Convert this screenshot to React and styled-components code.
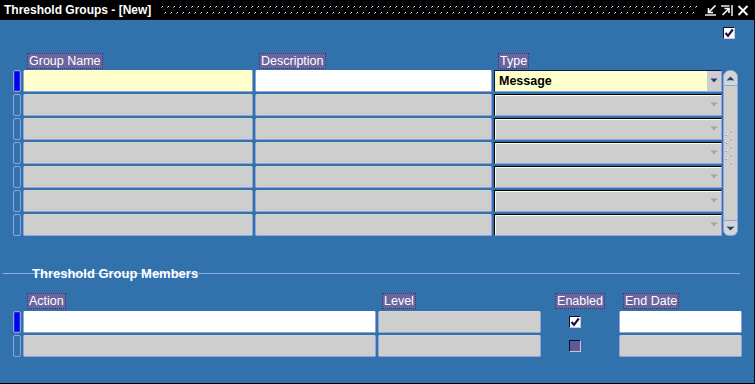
import React from 'react';
import styled, { createGlobalStyle } from 'styled-components';

const Global = createGlobalStyle`
  html, body { margin: 0; padding: 0; background: #3172ad; }
  body { font-family: "Liberation Sans", Arial, sans-serif; }
`;

const Window = styled.div`
  width: 755px;
  height: 384px;
  box-sizing: border-box;
  display: flex;
  flex-direction: column;
  background: #3172ad;
  border-right: 1px solid #0a0f1a;
  border-bottom: 1px solid #000;
  overflow: hidden;
`;

const TitleBar = styled.div`
  height: 20px;
  flex: none;
  background: #000;
  display: flex;
  align-items: center;
  padding: 0 5px 0 4px;
`;

const Title = styled.span`
  color: #fff;
  font: bold 12px "Liberation Sans", Arial, sans-serif;
  white-space: nowrap;
`;

const Dots = styled.svg`
  flex: 1;
  height: 9px;
  margin: 1px 7px 0 10px;
`;

const TitleIcons = styled.div`
  display: flex;
  align-items: center;
  gap: 4px;
`;

const Body = styled.div`
  flex: 1;
  display: flex;
  flex-direction: column;
  padding: 7px 0 0 13px;
`;

const TopRow = styled.div`
  display: flex;
  justify-content: flex-end;
  padding-right: 19px;
  height: 12px;
`;

const UpperBlock = styled.div`
  display: flex;
  margin-top: 14px;
`;

const Grid = styled.div`
  display: grid;
  grid-template-columns: ${p => p.$cols};
  grid-template-rows: ${p => p.$rows};
  column-gap: 2px;
  row-gap: 2px;
`;

const Label = styled.div`
  justify-self: ${p => (p.$center ? 'center' : 'start')};
  margin-left: ${p => (p.$center ? '0' : '4px')};
  height: 16px;
  box-sizing: border-box;
  padding: 0 1px;
  line-height: 14px;
  font-size: 12.5px;
  color: #fff;
  background: #6a659e;
  border: 1px dotted #34356a;
  white-space: nowrap;
`;

const Indicator = styled.div`
  box-sizing: border-box;
  height: 22px;
  border: 1px solid #8ea5dc;
  border-radius: 2px;
  background: ${p => (p.$active ? '#0000ff' : 'transparent')};
  box-shadow: ${p => (p.$active ? 'inset 0 0 0 1px #2a2ad0' : 'none')};
`;

const Field = styled.div`
  box-sizing: border-box;
  height: 22px;
  background: ${p => p.$bg || '#cecece'};
  border: 1px solid #8ea5dc;
  border-top-color: ${p => p.$bg || '#d4d4d4'};
  border-radius: 2px;
`;

const Combo = styled.div`
  box-sizing: border-box;
  height: 22px;
  display: flex;
  align-items: center;
  background: ${p => p.$bg || '#cecece'};
  border: 1px solid;
  border-color: ${p => (p.$active ? '#0b1848' : '#000')} #8ea5dc #8ea5dc ${p => (p.$active ? '#0b1848' : '#000')};
  box-shadow: ${p => (p.$active ? 'none' : 'inset 1px 1px 0 #fff')};
`;

const ComboText = styled.span`
  flex: 1;
  padding-left: 4px;
  font: bold 12.5px "Liberation Sans", Arial, sans-serif;
  color: #000;
`;

const ComboButton = styled.div`
  width: 14px;
  align-self: stretch;
  display: flex;
  align-items: center;
  justify-content: center;
  background: ${p => (p.$active ? '#cecece' : 'transparent')};
  margin-left: auto;
  padding-bottom: 1px;
`;

const Scroll = styled.div`
  width: 15px;
  height: 166px;
  margin: 17px 0 0 1px;
  box-sizing: border-box;
  background: #cecece;
  border: 1px solid #8ea5dc;
  border-radius: 7px 7px 6px 6px;
  display: flex;
  flex-direction: column;
`;

const ScrollButton = styled.div`
  height: 14px;
  flex: none;
  display: flex;
  align-items: center;
  justify-content: center;
  border-${p => (p.$down ? 'top' : 'bottom')}: 1px solid #8ea5dc;
  border-radius: ${p => (p.$down ? '0 0 6px 6px' : '6px 6px 0 0')};
  background: #d6d6d6;
`;

const Track = styled.div`
  flex: 1;
  display: flex;
  align-items: center;
  justify-content: center;
  padding-bottom: 10px;
`;

const SectionHeader = styled.div`
  margin: 30px 0 0 -10px;
  width: 737px;
  height: 16px;
  line-height: 16px;
  padding-left: 29px;
  box-sizing: border-box;
  font: bold 13px "Liberation Sans", Arial, sans-serif;
  color: #fff;
  background: linear-gradient(#8cb0e0, #8cb0e0) 0 7px / 100% 1px no-repeat;
`;

const LowerGrid = styled(Grid)`
  margin-top: 11px;
`;

const CheckCell = styled.div`
  align-self: center;
  justify-self: start;
  margin-left: 26px;
`;

const CheckBox = styled.div`
  width: 12px;
  height: 12px;
  box-sizing: border-box;
  background: ${p => (p.$disabled ? '#5f5a93' : '#fff')};
  border: 1px solid;
  border-color: #120a30 #c8c8d8 #c8c8d8 #120a30;
  display: flex;
  align-items: center;
  justify-content: center;
`;

const Check = ({ checked = true, disabled = false }) => (
  <CheckBox $disabled={disabled}>
    {checked && (
      <svg width="10" height="10" viewBox="0 0 10 10">
        <path d="M1.5 5 L4 7.8 L8.8 1.5" stroke="#1a1040" strokeWidth="2.2" fill="none" />
      </svg>
    )}
  </CheckBox>
);

const DownArrow = ({ color }) => (
  <svg width="8" height="5" viewBox="0 0 8 5">
    <path d="M0.5 0.5 H7.5 L4 4.5 Z" fill={color} />
  </svg>
);

const Grip = () => (
  <svg width="9" height="36" viewBox="0 0 9 36">
    {[0, 8, 16, 24, 32].map(y => (
      <g key={'r' + y}>
        <rect x="6" y={y} width="1" height="1" fill="#ffffff" />
        <rect x="5" y={y + 1} width="1" height="1" fill="#6a7ee0" />
      </g>
    ))}
    {[4, 12, 20, 28].map(y => (
      <g key={'l' + y}>
        <rect x="1" y={y} width="1" height="1" fill="#ffffff" />
        <rect x="0" y={y + 1} width="1" height="1" fill="#6a7ee0" />
      </g>
    ))}
  </svg>
);

const upperRows = [0, 1, 2, 3, 4, 5, 6];

export default function App() {
  return (
    <>
      <Global />
      <Window>
        <TitleBar>
          <Title>Threshold Groups - [New]</Title>
          <Dots>
            <defs>
              <pattern id="tdots" width="6" height="9" patternUnits="userSpaceOnUse">
                <rect x="1" y="0" width="1" height="1" fill="#ffffff" />
                <rect x="0" y="1" width="1" height="1" fill="#6d8fe0" />
                <rect x="4" y="6" width="1" height="1" fill="#ffffff" />
                <rect x="3" y="7" width="1" height="1" fill="#6d8fe0" />
              </pattern>
            </defs>
            <rect width="100%" height="100%" fill="url(#tdots)" />
          </Dots>
          <TitleIcons>
            <svg width="12" height="11" viewBox="0 0 12 11">
              <path d="M10.5 0.5 L4 7" stroke="#fff" strokeWidth="1.6" fill="none" />
              <path d="M3.5 3 V7.5 H8" stroke="#fff" strokeWidth="1.6" fill="none" />
              <path d="M0 10 H11" stroke="#fff" strokeWidth="1.4" />
            </svg>
            <svg width="12" height="11" viewBox="0 0 12 11">
              <path d="M0 1 H8.5" stroke="#fff" strokeWidth="1.4" />
              <path d="M11 0 V11" stroke="#fff" strokeWidth="1.4" />
              <path d="M1.5 10 L7.5 4" stroke="#fff" strokeWidth="1.6" fill="none" />
              <path d="M3.5 3.5 H8 V8" stroke="#fff" strokeWidth="1.6" fill="none" />
            </svg>
            <svg width="12" height="11" viewBox="0 0 12 11">
              <path d="M1.5 1 L10.5 10 M10.5 1 L1.5 10" stroke="#fff" strokeWidth="1.9" />
            </svg>
          </TitleIcons>
        </TitleBar>
        <Body>
          <TopRow>
            <Check />
          </TopRow>
          <UpperBlock>
            <Grid $cols="8px 230px 237px 228px" $rows="15px repeat(7, 22px)">
              <div />
              <Label>Group Name</Label>
              <Label>Description</Label>
              <Label>Type</Label>
              {upperRows.map(i => (
                <React.Fragment key={i}>
                  <Indicator $active={i === 0} />
                  <Field $bg={i === 0 ? '#ffffcc' : undefined} />
                  <Field $bg={i === 0 ? '#ffffff' : undefined} />
                  {i === 0 ? (
                    <Combo $active $bg="#ffffcc">
                      <ComboText>Message</ComboText>
                      <ComboButton $active>
                        <DownArrow color="#2a3a80" />
                      </ComboButton>
                    </Combo>
                  ) : (
                    <Combo>
                      <ComboButton>
                        <DownArrow color="#a4a4a4" />
                      </ComboButton>
                    </Combo>
                  )}
                </React.Fragment>
              ))}
            </Grid>
            <Scroll>
              <ScrollButton>
                <svg width="9" height="5" viewBox="0 0 9 5">
                  <path d="M0.5 4.5 H8.5 L4.5 0.5 Z" fill="#2a3a80" />
                  <path d="M2.5 4.5 H6.5" stroke="#5fd0e0" strokeWidth="1" />
                </svg>
              </ScrollButton>
              <Track>
                <Grip />
              </Track>
              <ScrollButton $down>
                <svg width="9" height="5" viewBox="0 0 9 5">
                  <path d="M0.5 0.5 H8.5 L4.5 4.5 Z" fill="#2a3a80" />
                  <path d="M2.5 0.5 H6.5" stroke="#5fd0e0" strokeWidth="1" />
                </svg>
              </ScrollButton>
            </Scroll>
          </UpperBlock>

          <SectionHeader>Threshold Group Members</SectionHeader>

          <LowerGrid $cols="8px 353px 163px 74px 123px" $rows="16px repeat(2, 22px)">
            <div />
            <Label>Action</Label>
            <Label>Level</Label>
            <Label $center>Enabled</Label>
            <Label>End Date</Label>

            <Indicator $active />
            <Field $bg="#ffffff" />
            <Field />
            <CheckCell>
              <Check />
            </CheckCell>
            <Field $bg="#ffffff" />

            <Indicator />
            <Field />
            <Field />
            <CheckCell>
              <Check checked={false} disabled />
            </CheckCell>
            <Field />
          </LowerGrid>
        </Body>
      </Window>
    </>
  );
}
